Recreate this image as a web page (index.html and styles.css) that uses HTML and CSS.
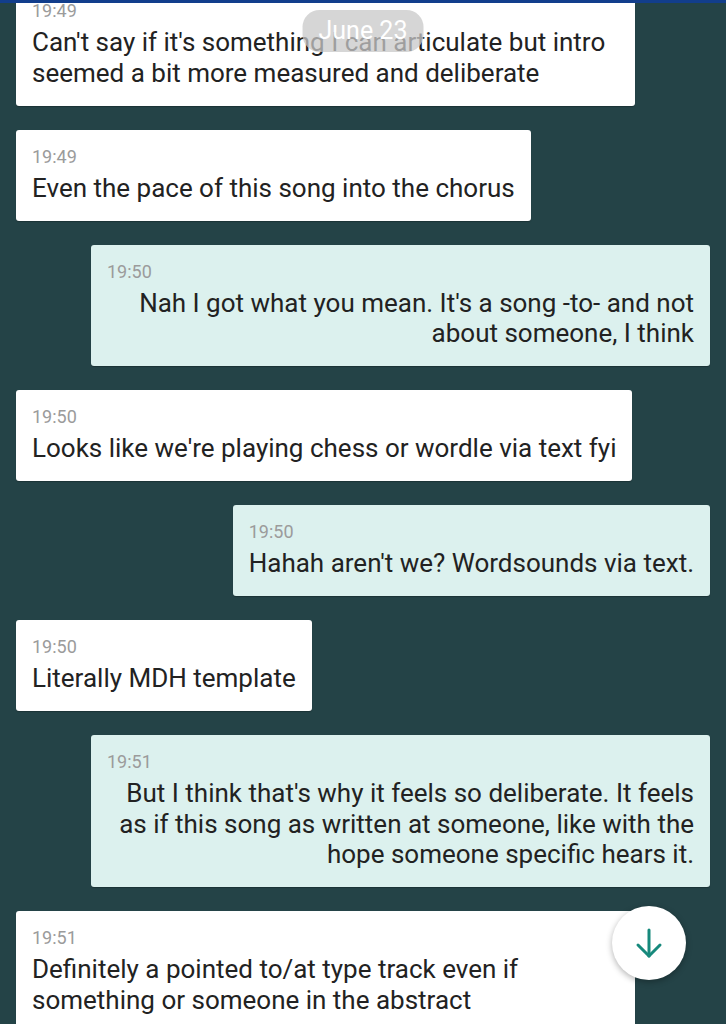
FILE: index.html
```html
<!DOCTYPE html>
<html lang="en">
<head>
    <meta charset="UTF-8">
    <meta name="viewport" content="width=device-width, initial-scale=1">
    <title>Chat - June 23</title>
    <link rel="stylesheet" href="styles.css">
</head>
<body>
<div class="topbar"></div>
<div id="chat">
    <div class="messages">
        <div class="msg in">
            <div class="time">19:49</div>
            <div class="text">Can't say if it's something I can articulate but intro seemed a bit more measured and deliberate</div>
        </div>
        <div class="msg in">
            <div class="time">19:49</div>
            <div class="text">Even the pace of this song into the chorus</div>
        </div>
        <div class="msg out">
            <div class="time">19:50</div>
            <div class="text">Nah I got what you mean. It's a song -to- and not about someone, I think</div>
        </div>
        <div class="msg in">
            <div class="time">19:50</div>
            <div class="text">Looks like we're playing chess or wordle via text fyi</div>
        </div>
        <div class="msg out">
            <div class="time">19:50</div>
            <div class="text">Hahah aren't we? Wordsounds via text.</div>
        </div>
        <div class="msg in">
            <div class="time">19:50</div>
            <div class="text">Literally MDH template</div>
        </div>
        <div class="msg out">
            <div class="time">19:51</div>
            <div class="text">But I think that's why it feels so deliberate. It feels as if this song as written at someone, like with the hope someone specific hears it.</div>
        </div>
        <div class="msg in">
            <div class="time">19:51</div>
            <div class="text">Definitely a pointed to/at type track even if something or someone in the abstract</div>
        </div>
    </div>
    <div class="date-pill">June 23</div>
    <button class="scroll-down" aria-label="Scroll to bottom">
        <svg width="32" height="32" viewBox="0 0 32 32" fill="none" stroke="#17897c" stroke-width="3" stroke-linecap="round" stroke-linejoin="round">
            <line x1="16" y1="3" x2="16" y2="29"/>
            <polyline points="5,18 16,29 27,18"/>
        </svg>
    </button>
</div>
</body>
</html>
```

FILE: styles.css
```css
body {
    margin: 0;
    background: #244347;
    font-family: Roboto, "Liberation Sans", sans-serif;
    height: 1024px;
    overflow: hidden;
}

.topbar {
    height: 3px;
    background: #123e8c;
}

#chat {
    position: relative;
    height: 1021px;
    overflow: hidden;
}

.messages {
    display: flex;
    flex-direction: column;
    gap: 24px;
    padding: 0 16px;
    margin-top: -19px;
}

.msg {
    max-width: 587px;
    padding: 16px 16px 17.5px;
    border-radius: 3px;
    box-shadow: 0 1px 1px rgba(0, 0, 0, 0.25);
}

.msg.in {
    align-self: flex-start;
    background: #ffffff;
}

.msg.out {
    align-self: flex-end;
    background: #dcf1ee;
    text-align: right;
}

.time {
    height: 27px;
    font-size: 18px;
    line-height: 22px;
    color: #9b9b9b;
    text-align: left;
}

.text {
    font-size: 26px;
    line-height: 30.5px;
    color: #222222;
}

.date-pill {
    position: absolute;
    top: 7px;
    left: 50%;
    transform: translateX(-50%);
    padding: 8px 16px;
    border-radius: 17px;
    background: rgba(200, 200, 200, 0.75);
    color: #ffffff;
    font-size: 25px;
    line-height: 26px;
}

.scroll-down {
    position: absolute;
    left: 612px;
    top: 903px;
    width: 74px;
    height: 74px;
    border: none;
    border-radius: 50%;
    background: #ffffff;
    box-shadow: 0 2px 6px rgba(0, 0, 0, 0.3);
    display: flex;
    align-items: center;
    justify-content: center;
    padding: 0;
}
```
